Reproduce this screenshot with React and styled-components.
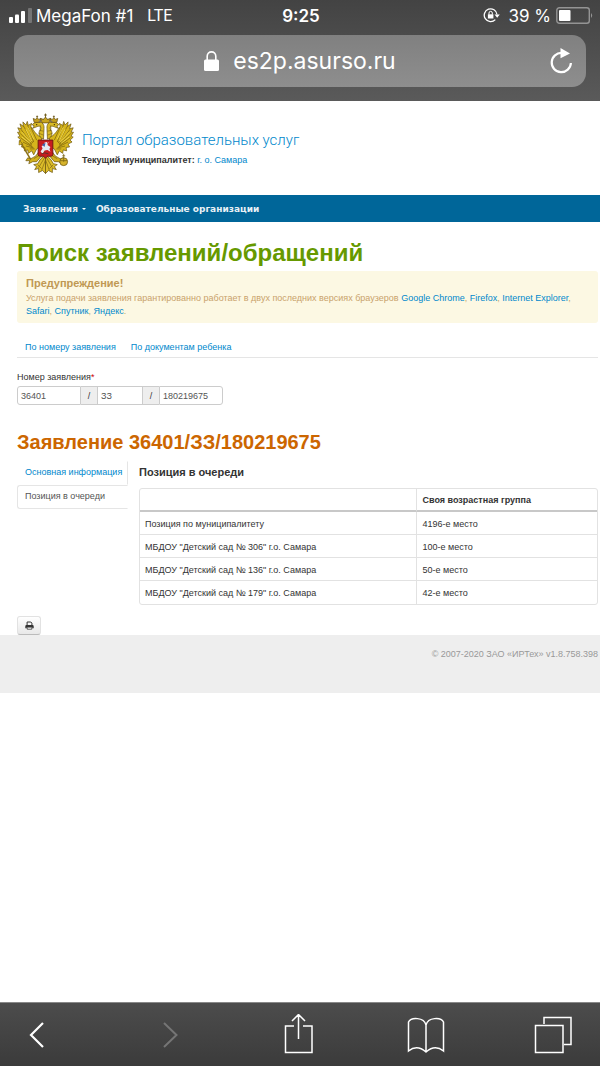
import React from "react";
import styled, { createGlobalStyle } from "styled-components";

const GlobalStyle = createGlobalStyle`
  * { box-sizing: border-box; }
  body { margin: 0; background: #fff; color: #333; font: 9px/16px "Liberation Sans", Arial, sans-serif; }
  h1, h2, h3, p { margin: 0; }
  button, input { font: inherit; color: inherit; }
  svg { display: block; flex: none; }
`;

const Screen = styled.div`
  min-height: 100vh;
  display: flex;
  flex-direction: column;
`;

const BrowserTop = styled.header`
  height: 101px;
  padding: 0 14px;
  background: linear-gradient(#434343, #5a5a5a);
  color: #fff;
  font-family: Inter, Roboto, sans-serif;
`;

const StatusBar = styled.div`
  height: 35px;
  margin: 0 -8px 0 -6px;
  padding-bottom: 4px;
  display: grid;
  grid-template-columns: 1fr auto 1fr;
  align-items: center;
  font-size: 17px;
  line-height: 20px;
`;

const StatusGroup = styled.div`
  display: flex;
  align-items: center;
  justify-content: ${(p) => (p.$end ? "flex-end" : "flex-start")};
  gap: ${(p) => (p.$end ? "5px" : "4px")};
  white-space: nowrap;
`;

const Network = styled.span`
  margin-left: 10px;
  font-family: Roboto, sans-serif;
  font-size: 16px;
`;

const Charge = styled.span`
  margin-left: 3px;
`;

const Clock = styled.time`
  font-weight: 600;
`;

const AddressBar = styled.div`
  height: 52px;
  padding: 0 12px;
  display: grid;
  grid-template-columns: 28px 1fr 28px;
  align-items: center;
  border-radius: 14px;
  background: linear-gradient(#808080, #8e8e8e);
`;

const Address = styled.div`
  grid-column: 2;
  display: flex;
  align-items: center;
  justify-content: center;
  gap: 14px;
  font-size: 23px;
  line-height: 28px;
`;

const IconButton = styled.button`
  padding: 0;
  display: grid;
  place-items: center;
  border: 0;
  background: none;
  color: ${(p) => (p.disabled ? "#757575" : "#fff")};
`;

const SiteHeader = styled.header`
  height: 94px;
  padding: 12px 17px;
  display: flex;
  gap: 8px;
`;

const Brand = styled.div`
  padding-top: 17px;
`;

const PortalName = styled.a`
  display: block;
  color: #08c;
  font: 300 15px/20px Roboto, sans-serif;
  text-decoration: none;
`;

const Municipality = styled.p`
  padding-top: 2px;
`;

const Link = styled.a`
  color: #08c;
  text-decoration: none;
`;

const SiteNav = styled.nav`
  height: 27px;
  padding: 0 23px;
  display: flex;
  align-items: center;
  gap: 10px;
  background: #069;
`;

const NavLink = styled.a`
  display: flex;
  align-items: center;
  gap: 4px;
  color: #e8f1f6;
  font: bold 9px/16px "DejaVu Sans", Verdana, sans-serif;
  text-decoration: none;
`;

const Caret = styled.span`
  border: 2px solid transparent;
  border-top-color: #fff;
  border-bottom: 0;
`;

const Content = styled.main`
  padding: 17px 2px 0 17px;
`;

const PageTitle = styled.h1`
  color: #690;
  font-size: 24px;
  line-height: 28px;
`;

const Warning = styled.section`
  margin-top: 4px;
  padding: 5px 9px;
  border-radius: 3px;
  background: #fcf8e3;
  color: #c9a26b;
  line-height: 13px;
`;

const WarningTitle = styled.h3`
  color: #c09853;
  font-size: 11px;
  line-height: 14px;
  padding-bottom: 2px;
`;

const Tabs = styled.nav`
  margin-top: 16px;
  padding: 0 8px 2px;
  display: flex;
  gap: 15px;
  border-bottom: 1px solid #e5e5e5;
`;

const SearchForm = styled.form`
  padding-top: 11px;
`;

const Label = styled.label`
  display: block;
`;

const Required = styled.span`
  color: #c00;
`;

const NumberGroup = styled.div`
  margin-top: 1px;
  display: flex;
  height: 19px;
`;

const NumberInput = styled.input`
  width: ${(p) => (p.$short ? "46px" : "64px")};
  padding: 0 3px;
  border: 1px solid #ccc;
  border-radius: 0;
  background: #fff;
  color: #555;
  &:first-child { border-radius: 3px 0 0 3px; }
  &:last-child { border-radius: 0 3px 3px 0; }
`;

const Slash = styled.span`
  width: 16px;
  border: solid #ccc;
  border-width: 1px 0;
  background: #eee;
  line-height: 18px;
  text-align: center;
`;

const ResultTitle = styled.h2`
  margin-top: 25px;
  color: #c60;
  font-size: 20px;
  line-height: 24px;
`;

const Result = styled.div`
  margin-top: 7px;
  display: grid;
  grid-template-columns: 111px 1fr;
  gap: 11px;
  align-items: start;
`;

const SideTabs = styled.nav`
  display: flex;
  flex-direction: column;
`;

const SideTab = styled.a`
  height: 24px;
  padding: 0 7px;
  border: 1px solid ${(p) => (p.$active ? "#e5e5e5" : "transparent")};
  border-right: 1px solid ${(p) => (p.$active ? "transparent" : "#e5e5e5")};
  border-radius: 3px 0 0 3px;
  color: ${(p) => (p.$active ? "#555" : "#08c")};
  line-height: 20px;
  text-decoration: none;
  white-space: nowrap;
`;

const QueueTitle = styled.h3`
  padding: 3px 0 8px;
  font-size: 11px;
  line-height: 16px;
`;

const QueueTable = styled.table`
  width: 100%;
  border: 1px solid #e2e2e2;
  border-radius: 3px;
  border-spacing: 0;
  table-layout: fixed;
  th, td {
    height: 23px;
    padding: 1px 5px 0;
    border-bottom: 1px solid #e2e2e2;
    text-align: left;
  }
  th { border-bottom: 2px solid #c8c8c8; }
  th:first-child { width: 60.5%; }
  th + th, td + td { border-left: 1px solid #e2e2e2; }
  tr:last-child td { border-bottom: 0; }
`;

const PrintButton = styled.button`
  width: 24px;
  height: 19px;
  margin-top: 11px;
  padding: 0;
  display: grid;
  place-items: center;
  border: 1px solid #e2e2e2;
  border-bottom-color: #bbb;
  border-radius: 3px;
  background: linear-gradient(#fff, #e8e8e8);
`;

const SiteFooter = styled.footer`
  height: 58px;
  padding: 11px 2px;
  background: #eee;
  color: #999;
  text-align: right;
`;

const BrowserToolbar = styled.nav`
  height: 64px;
  margin-top: auto;
  padding: 0 27px 0 21px;
  display: flex;
  align-items: center;
  justify-content: space-between;
  border-top: 1px solid #888;
  background: linear-gradient(#4c4c4c, #3b3b3b);
`;

const SignalIcon = () => (
  <svg width="24" height="16" viewBox="0 0 24 16" fill="#fff" aria-hidden="true">
    <rect x="1" y="9" width="4" height="6" rx="1" />
    <rect x="7" y="6.5" width="4" height="8.5" rx="1" />
    <rect x="13" y="3" width="4" height="12" rx="1" />
    <rect x="20" y="0" width="4" height="15" rx="1" opacity=".25" />
  </svg>
);

const RotationLockIcon = () => (
  <svg width="17" height="17" viewBox="0 0 17 17" fill="none" stroke="#fff" strokeWidth="1.3" aria-hidden="true">
    <path d="M12.3 12.6A6.4 6.4 0 1 1 14 7.5" />
    <path d="M11.5 7.4h5.3l-2.6 3.4z" fill="#fff" stroke="none" />
    <path d="M4.9 7.3h5.5v4.2H4.9z" fill="#fff" stroke="none" />
    <path d="M6 7.6V6a1.65 1.65 0 0 1 3.3 0v1.6" strokeWidth="1" />
  </svg>
);

const BatteryIcon = () => (
  <svg width="38" height="17" viewBox="0 0 38 17" aria-hidden="true">
    <rect x=".8" y=".8" width="32.5" height="15.4" rx="2.5" fill="none" stroke="#949494" strokeWidth="1.4" />
    <rect x="3" y="3" width="11.5" height="11" rx="1" fill="#fff" />
    <path d="M35 6q2.4 2.5 0 5z" fill="#949494" />
  </svg>
);

const LockIcon = () => (
  <svg width="15" height="20" viewBox="0 0 15 20" aria-hidden="true">
    <rect y="8.5" width="15" height="11.5" rx="1.5" fill="#fff" />
    <path d="M3.2 9V5.2a4.3 4.3 0 0 1 8.6 0V9" fill="none" stroke="#fff" strokeWidth="1.6" />
  </svg>
);

const ReloadIcon = () => (
  <svg width="24" height="26" viewBox="0 0 24 26" fill="none" stroke="#fff" strokeWidth="2.2" aria-hidden="true">
    <path d="M14 5A9.6 9.6 0 1 0 22.9 15" />
    <path d="M12.5 0v10.2L22 5.4z" fill="#fff" stroke="none" />
  </svg>
);

const ToolIcon = ({ children }) => (
  <svg width="40" height="42" viewBox="0 0 40 42" fill="none" stroke="currentColor" strokeWidth="1.5" aria-hidden="true">
    {children}
  </svg>
);

const PrinterIcon = () => (
  <svg width="9" height="9" viewBox="0 0 9 9" aria-hidden="true">
    <path d="M2.1 4.3V1h3.7l1.1 1.1v2.2" fill="none" stroke="#333" />
    <path d="M1.5 4h6Q8.7 4 8.7 5.2V7.2H7.2V6H1.8V7.2H.3V5.2Q.3 4 1.5 4z" fill="#333" />
    <path d="M2.2 6.2h4.6v2H2.2z" fill="#fff" stroke="#333" strokeWidth=".8" />
  </svg>
);

/* One half of the eagle: wing, neck, crowned head, leg. The other half mirrors it. */
const EagleHalf = () => (
  <g strokeLinejoin="round">
    <path
      d="M25 24C20 23 17 17 14 13L15 10 11.5 12 10.5 8 9 11.5 6 8.5 6.5 13 3 10.5 4.5 15.5.8 14.5 3 19 .5 19 3 23 .8 24 4 27 2 29 6 31 4.5 34 8 34.5 7.5 38 11 37 11.5 40.5 15 38 17 42 20 36 25 33z"
      fill="#d6b51c" stroke="#6b5510" strokeWidth=".7"
    />
    <path
      d="M10.5 11 17 29M6.5 12.5 16 30M4 16 15 31M3 20 15 32M3.5 24.5 15 33M6 29 16 34M9 33 17 35M13 36 18 36M14 14 20 27"
      fill="none" stroke="#745d0e" strokeWidth=".7"
    />
    <path d="M9 16 15 28M5 19 14 29M5 24 13 30M11 14 17 26" fill="none" stroke="#f4dc54" strokeWidth=".8" />
    <path
      d="M27 26C21 24 22 18 24 16 25 13 23 12 20 13.5L16 15 17.5 12.5 15.5 11.5Q17 9 20 9C25 7 28 11 27.5 15z"
      fill="#d9ba25" stroke="#654f0d" strokeWidth=".7"
    />
    <path d="M24 12q-1 3 0 6M22 20l5 2M23 17l4 1" fill="none" stroke="#776011" strokeWidth=".6" />
    <circle cx="20" cy="11.3" r=".7" fill="#3d3008" />
    <path d="M17.5 9 16.5 5 19 6 20.5 4 22 6 24.5 5 23.5 9z" fill="#c49e1f" stroke="#604909" strokeWidth=".7" />
    <path d="M20.5 2v2M19.5 3h2" stroke="#604909" strokeWidth=".7" />
    <path d="M22 39Q20 44 14 46L11 45 9 48 13 48 12 51 16 49 20 49 25 43z" fill="#d2b01c" stroke="#664f0c" strokeWidth=".7" />
    <path d="M29 42Q23 46 21 51L17 52 20 54 18 57 22 56 22 60 26 58 29 61z" fill="#dcbd29" stroke="#664f0c" strokeWidth=".7" />
    <path d="M28 45 22 55M29 47 25 58M21 52l4 4M17 46l5-3" fill="none" stroke="#806711" strokeWidth=".7" />
    <path d="M22 9Q25 5 28 6" fill="none" stroke="#7d745e" strokeWidth="1.2" />
  </g>
);

const CoatOfArms = () => (
  <svg width="57" height="63" viewBox="0 0 58 63" role="img" aria-label="Герб">
    <EagleHalf />
    <g transform="translate(58 0) scale(-1 1)"><EagleHalf /></g>
    <path d="M25.5 9.5 24 5 27 6 29 3.5 31 6 34 5 32.5 9.5z" fill="#c9a51e" stroke="#5e480a" strokeWidth=".7" />
    <path d="M29 0v4M27.6 1.5h2.8" stroke="#6b5510" strokeWidth=".9" />
    <path d="M14 47 3.5 29" fill="none" stroke="#8b7014" strokeWidth="1.5" />
    <path d="M2 32 2.5 27 5.5 31z" fill="#d9ba25" stroke="#6b5510" strokeWidth=".5" />
    <circle cx="47.5" cy="49" r="4" fill="#d6b32b" stroke="#665112" strokeWidth=".7" />
    <path d="M44 48h7M47.5 41v8M46 43h3" stroke="#78610f" strokeWidth=".8" />
    <path d="M21.5 27H36.5V42Q36.5 43.5 34 43.5H31L29 45.5 27 43.5H24Q21.5 43.5 21.5 42z" fill="#c71d20" stroke="#661713" strokeWidth=".9" />
    <path d="M24 38.5 26 35.5 25 33 28 32 28 29.5 30.5 29 31 32 34 34 33 36 34 39 31 37 28 37.5 26 41z" fill="#e3eaf3" />
    <path d="M29 30 25.5 31.5 28 34z" fill="#3c62ad" />
    <path d="M32 29 26 40" stroke="#f0ead8" strokeWidth=".6" />
    <path d="M25 41q3-2 7 0" fill="none" stroke="#4c342b" strokeWidth=".9" />
  </svg>
);

const browsers = ["Google Chrome", "Firefox", "Internet Explorer", "Safari", "Спутник", "Яндекс"];

const positions = [
  ["Позиция по муниципалитету", "4196-е место"],
  ['МБДОУ "Детский сад № 306" г.о. Самара', "100-е место"],
  ['МБДОУ "Детский сад № 136" г.о. Самара', "50-е место"],
  ['МБДОУ "Детский сад № 179" г.о. Самара', "42-е место"],
];

export default function App() {
  return (
    <Screen>
      <GlobalStyle />
      <BrowserTop>
        <StatusBar>
          <StatusGroup>
            <SignalIcon />
            <span>MegaFon #1</span>
            <Network>LTE</Network>
          </StatusGroup>
          <Clock>9:25</Clock>
          <StatusGroup $end>
            <RotationLockIcon />
            <Charge>39 %</Charge>
            <BatteryIcon />
          </StatusGroup>
        </StatusBar>
        <AddressBar>
          <Address>
            <LockIcon />
            <span>es2p.asurso.ru</span>
          </Address>
          <IconButton aria-label="Обновить"><ReloadIcon /></IconButton>
        </AddressBar>
      </BrowserTop>

      <SiteHeader>
        <CoatOfArms />
        <Brand>
          <PortalName href="#">Портал образовательных услуг</PortalName>
          <Municipality><b>Текущий муниципалитет:</b> <Link href="#">г. о. Самара</Link></Municipality>
        </Brand>
      </SiteHeader>
      <SiteNav>
        <NavLink href="#">Заявления <Caret /></NavLink>
        <NavLink href="#">Образовательные организации</NavLink>
      </SiteNav>

      <Content>
        <PageTitle>Поиск заявлений/обращений</PageTitle>
        <Warning>
          <WarningTitle>Предупреждение!</WarningTitle>
          <p>
            Услуга подачи заявления гарантированно работает в двух последних версиях браузеров{" "}
            {browsers.map((name, i) => (
              <React.Fragment key={name}>
                <Link href="#">{name}</Link>{i < browsers.length - 1 ? ", " : "."}
              </React.Fragment>
            ))}
          </p>
        </Warning>
        <Tabs>
          <Link href="#">По номеру заявления</Link>
          <Link href="#">По документам ребенка</Link>
        </Tabs>
        <SearchForm>
          <Label htmlFor="number">Номер заявления<Required>*</Required></Label>
          <NumberGroup>
            <NumberInput id="number" defaultValue="36401" />
            <Slash>/</Slash>
            <NumberInput $short aria-label="Тип заявления" defaultValue="ЗЗ" />
            <Slash>/</Slash>
            <NumberInput aria-label="Порядковый номер" defaultValue="180219675" />
          </NumberGroup>
        </SearchForm>

        <ResultTitle>Заявление 36401/ЗЗ/180219675</ResultTitle>
        <Result>
          <SideTabs>
            <SideTab href="#">Основная информация</SideTab>
            <SideTab href="#" $active>Позиция в очереди</SideTab>
          </SideTabs>
          <section>
            <QueueTitle>Позиция в очереди</QueueTitle>
            <QueueTable>
              <thead>
                <tr><th /><th>Своя возрастная группа</th></tr>
              </thead>
              <tbody>
                {positions.map(([place, position]) => (
                  <tr key={place}><td>{place}</td><td>{position}</td></tr>
                ))}
              </tbody>
            </QueueTable>
          </section>
        </Result>
        <PrintButton aria-label="Печать"><PrinterIcon /></PrintButton>
      </Content>
      <SiteFooter>© 2007-2020 ЗАО «ИРТех» v1.8.758.398</SiteFooter>

      <BrowserToolbar>
        <IconButton aria-label="Назад">
          <ToolIcon><path d="M22 9 10 21 22 33" strokeWidth="2.2" /></ToolIcon>
        </IconButton>
        <IconButton aria-label="Вперёд" disabled>
          <ToolIcon><path d="M15 9 27.5 21 15 33" strokeWidth="2" /></ToolIcon>
        </IconButton>
        <IconButton aria-label="Поделиться">
          <ToolIcon><path d="M17 12H8.5V38.5H35V12H26M21.5 25V1M15 7 21.5.5 28 7" /></ToolIcon>
        </IconButton>
        <IconButton aria-label="Закладки">
          <ToolIcon><path d="M21 11C19 3 6 3 3.5 8V37Q12 30 21 38 30 30 38.5 37V8C36 3 23 3 21 11V38" /></ToolIcon>
        </IconButton>
        <IconButton aria-label="Вкладки">
          <ToolIcon><path d="M2.5 11.5H30V38.5H2.5zM11 10V3.5H38V30.5H31" /></ToolIcon>
        </IconButton>
      </BrowserToolbar>
    </Screen>
  );
}
